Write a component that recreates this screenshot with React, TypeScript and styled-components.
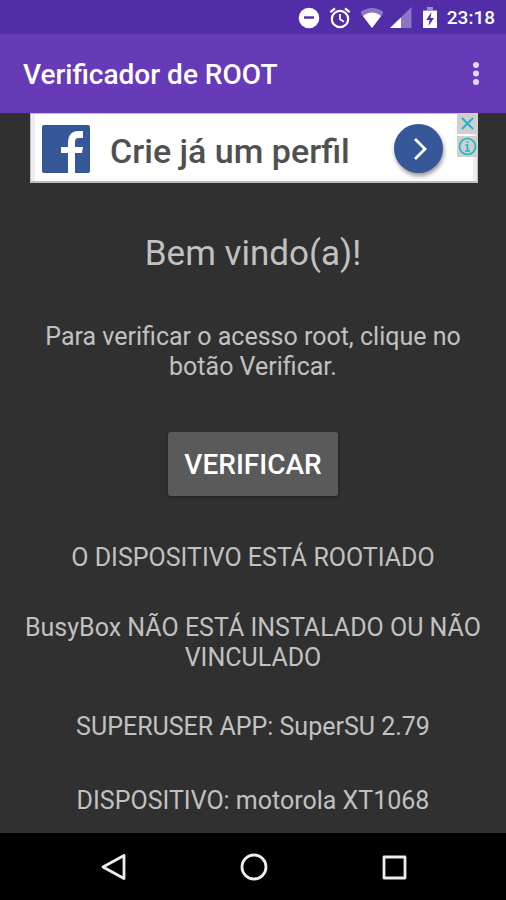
import React from "react";
import styled, { createGlobalStyle } from "styled-components";

const GlobalStyle = createGlobalStyle`
  * { box-sizing: border-box; }
  body { margin: 0; background: #303030; font-family: Roboto, sans-serif; }
  button { font-family: inherit; border: 0; padding: 0; background: none; cursor: pointer; }
  svg { display: block; }
`;

const Screen = styled.div`
  display: flex;
  flex-direction: column;
  min-height: 100vh;
  background: #303030;
`;

const StatusBar = styled.div`
  display: flex;
  align-items: center;
  justify-content: flex-end;
  height: 34px;
  padding: 2px 11px 0 0;
  background: #512da8;
  color: #fff;
`;

const StatusIcon = styled.svg<{ $gap: number }>`
  width: 22px;
  height: 22px;
  margin-right: ${(p) => p.$gap}px;
`;

const Clock = styled.time`
  font-size: 19px;
  line-height: 24px;
  font-weight: 500;
`;

const Toolbar = styled.header`
  display: flex;
  align-items: center;
  justify-content: space-between;
  height: 79px;
  padding: 2px 18px 0 23px;
  background: #673ab7;
`;

const Title = styled.h1`
  margin: 0;
  color: #fff;
  font-size: 28px;
  line-height: 32px;
  font-weight: 500;
`;

const MenuButton = styled.button`
  width: 24px;
  height: 32px;
`;

const Ad = styled.aside`
  position: relative;
  display: flex;
  align-items: center;
  height: 70px;
  margin: 0 28px 0 30px;
  padding: 2px 34px 0 11px;
  border: 1px solid #bdbdbd;
  border-width: 1px 1px 2px;
  box-shadow: inset 4px 0 #ededf1, inset -4px 0 #ededf1;
  background: #fff;
`;

const AdText = styled.span`
  flex: 1;
  margin-left: 20px;
  padding-top: 4px;
  color: #505050;
  font-size: 34px;
  line-height: 40px;
  font-weight: 500;
  white-space: nowrap;
`;

const AdButton = styled.button`
  display: grid;
  place-items: center;
  width: 49px;
  height: 49px;
  border-radius: 50%;
  background: #365899;
  box-shadow: 1px 3px 4px #0006;
`;

const AdControls = styled.div`
  position: absolute;
  top: -1px;
  right: -1px;
  display: grid;
  gap: 2px;
`;

const AdControl = styled.button`
  display: grid;
  place-items: center;
  width: 21px;
  height: 21px;
  background: #cfcfcf;
`;

const Content = styled.main`
  flex: 1;
  display: flex;
  flex-direction: column;
  align-items: center;
  padding: 50px 20px 16px;
  color: #c1c1c1;
  text-align: center;
`;

const Welcome = styled.h2`
  margin: 0 0 47px;
  font-size: 35px;
  line-height: 42px;
  font-weight: 400;
`;

const Message = styled.p<{ $gap: number }>`
  margin: 0 0 ${(p) => p.$gap}px;
  font-size: 25px;
  line-height: 30px;
`;

const VerifyButton = styled.button`
  height: 64px;
  margin-bottom: 47px;
  padding: 2px 16px 0;
  border-radius: 3px;
  background: #5a5a5b;
  box-shadow: 0 1px 3px #0006;
  color: #fff;
  font-size: 28px;
  line-height: 32px;
  font-weight: 500;
`;

const NavBar = styled.nav`
  display: flex;
  align-items: center;
  justify-content: center;
  gap: 112px;
  height: 67px;
  padding-left: 1px;
  background: #000;
`;

const NavButton = styled.button`
  width: 28px;
  height: 28px;
`;

export default function App() {
  return (
    <>
      <GlobalStyle />
      <Screen>
        <StatusBar>
          <StatusIcon $gap={9} viewBox="0 0 22 22" aria-hidden="true">
            <circle cx="11" cy="11" r="10.3" fill="#fff" />
            <path d="M6 10.5h10" stroke="#512da8" strokeWidth="2.4" />
          </StatusIcon>
          <StatusIcon $gap={10} viewBox="0 0 22 22" fill="none" stroke="#fff" aria-hidden="true">
            <circle cx="11" cy="12" r="8.2" strokeWidth="2.2" />
            <path d="M1.3 5.2 6 1.3M20.7 5.2 16 1.3" strokeWidth="2.2" />
            <path d="M11 7v5.3l4 2.4" strokeWidth="1.8" />
          </StatusIcon>
          <StatusIcon $gap={7} viewBox="0 0 22 22" aria-hidden="true">
            <path d="M-1 5.5C6-.4 16-.4 23 5.5L11 21Z" fill="#fff" opacity=".35" />
            <path d="M2 9C7.5 4.2 14.5 4.2 20 9L11 21Z" fill="#fff" />
          </StatusIcon>
          <StatusIcon $gap={7} viewBox="0 0 22 22" aria-hidden="true">
            <path d="M21.5 0v21H0Z" fill="#fff" opacity=".35" />
            <path d="M11 10.5V21H0Z" fill="#fff" />
          </StatusIcon>
          <StatusIcon $gap={6} viewBox="0 0 22 22" aria-hidden="true">
            <path d="M8 0h6v3h4v3H4V3h4Z" fill="#fff" opacity=".45" />
            <path d="M4 4h14v17H4Z" fill="#fff" />
            <path d="M12.5 5 7.2 13h3.3l-1 6 5.5-8h-3.5Z" fill="#512da8" />
          </StatusIcon>
          <Clock>23:18</Clock>
        </StatusBar>
        <Toolbar>
          <Title>Verificador de ROOT</Title>
          <MenuButton aria-label="Mais opções">
            <svg width="24" height="32" viewBox="0 0 24 32" fill="#e3d8f3">
              <circle cx="12" cy="6" r="3" />
              <circle cx="12" cy="14.5" r="3" />
              <circle cx="12" cy="23" r="3" />
            </svg>
          </MenuButton>
        </Toolbar>
        <Ad>
          <svg width="48" height="48" viewBox="0 0 48 48" role="img" aria-label="Facebook">
            <rect width="48" height="48" rx="2" fill="#365899" />
            <path d="M26 48V28h-7v-6h7v-4C26 10 30 6 36 6h5v7h-4c-3 0-4 1.500-4 4v5h8l-1 6h-7v20Z" fill="#fff" />
          </svg>
          <AdText>Crie já um perfil</AdText>
          <AdButton aria-label="Abrir anúncio">
            <svg width="24" height="24" viewBox="0 0 24 24" fill="none" stroke="#fff" strokeWidth="2.8">
              <path d="m8 2 10 10L8 22" />
            </svg>
          </AdButton>
          <AdControls>
            <AdControl aria-label="Fechar anúncio">
              <svg width="15" height="15" viewBox="0 0 15 15" stroke="#20b4ce" strokeWidth="2">
                <path d="m2 2 11 11M13 2 2 13" />
              </svg>
            </AdControl>
            <AdControl aria-label="Sobre o anúncio">
              <svg width="19" height="19" viewBox="0 0 19 19" fill="none" stroke="#20b4ce" strokeWidth="1.7">
                <circle cx="9.5" cy="9.5" r="8" />
                <path d="M7.5 8h2v6M7 14h5M8.5 5h2" />
              </svg>
            </AdControl>
          </AdControls>
        </Ad>
        <Content>
          <Welcome>Bem vindo(a)!</Welcome>
          <Message $gap={50}>Para verificar o acesso root, clique no botão Verificar.</Message>
          <VerifyButton>VERIFICAR</VerifyButton>
          <Message $gap={40}>O DISPOSITIVO ESTÁ ROOTIADO</Message>
          <Message $gap={39}>BusyBox NÃO ESTÁ INSTALADO OU NÃO VINCULADO</Message>
          <Message $gap={44}>SUPERUSER APP: SuperSU 2.79</Message>
          <Message $gap={0}>DISPOSITIVO: motorola XT1068</Message>
        </Content>
        <NavBar>
          <NavButton aria-label="Voltar">
            <svg width="28" height="28" viewBox="0 0 28 28" fill="none" stroke="#eee" strokeWidth="2.8" strokeLinejoin="round">
              <path d="M24 2.5v23L3 14Z" />
            </svg>
          </NavButton>
          <NavButton aria-label="Início">
            <svg width="28" height="28" viewBox="0 0 28 28" fill="none" stroke="#eee" strokeWidth="2.8">
              <circle cx="14" cy="14" r="12" />
            </svg>
          </NavButton>
          <NavButton aria-label="Recentes">
            <svg width="28" height="28" viewBox="0 0 28 28" fill="none" stroke="#eee" strokeWidth="2.8" strokeLinejoin="round">
              <rect x="4" y="4" width="21" height="21" />
            </svg>
          </NavButton>
        </NavBar>
      </Screen>
    </>
  );
}
